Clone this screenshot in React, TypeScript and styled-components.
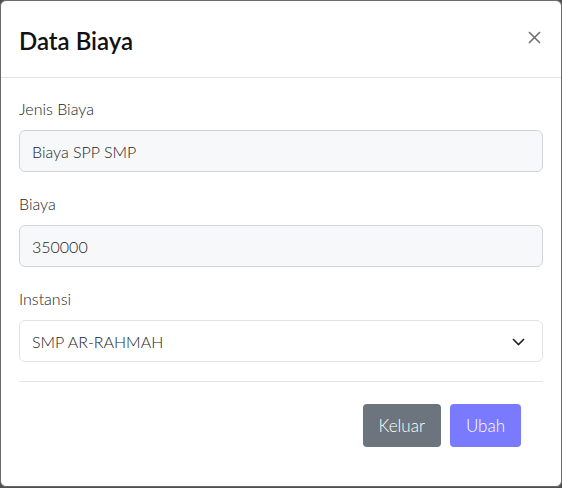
import React, { useState } from 'react';
import styled, { createGlobalStyle } from 'styled-components';

const GlobalStyle = createGlobalStyle`
  html, body {
    margin: 0;
    padding: 0;
    background: #4f4f4f;
    font-family: Lato, "Liberation Sans", sans-serif;
  }
  * {
    box-sizing: border-box;
  }
`;

const INSTANSI = ['SMP AR-RAHMAH', 'SD AR-RAHMAH', 'SMA AR-RAHMAH'];

const App: React.FC = () => {
  const [jenis, setJenis] = useState('Biaya SPP SMP');
  const [biaya, setBiaya] = useState('350000');
  const [instansi, setInstansi] = useState(INSTANSI[0]);

  return (
    <>
      <GlobalStyle />
      <Modal>
        <Header>
          <Title>Data Biaya</Title>
          <CloseButton aria-label="Close">
            <svg width="13" height="13" viewBox="0 0 13 13">
              <path d="M1 1L12 12M12 1L1 12" stroke="#6f6f6f" strokeWidth="1.6" />
            </svg>
          </CloseButton>
        </Header>
        <Body>
          <Field>
            <Label>Jenis Biaya</Label>
            <Input value={jenis} onChange={(e) => setJenis(e.target.value)} />
          </Field>
          <Field>
            <Label>Biaya</Label>
            <Input value={biaya} onChange={(e) => setBiaya(e.target.value)} />
          </Field>
          <Field>
            <Label>Instansi</Label>
            <SelectWrap>
              <Select value={instansi} onChange={(e) => setInstansi(e.target.value)}>
                {INSTANSI.map((i) => (
                  <option key={i}>{i}</option>
                ))}
              </Select>
              <Chevron width="13" height="8" viewBox="0 0 13 8">
                <path d="M1 1L6.5 6.5L12 1" stroke="#222" strokeWidth="1.6" fill="none" />
              </Chevron>
            </SelectWrap>
          </Field>
          <Divider />
          <Footer>
            <Button $variant="secondary">Keluar</Button>
            <Button $variant="primary">Ubah</Button>
          </Footer>
        </Body>
      </Modal>
    </>
  );
};

export default App;

const Modal = styled.div`
  width: 562px;
  height: 487px;
  background: #fff;
  border: 1px solid #6a6a6a;
  border-radius: 6px;
  overflow: hidden;
`;

const Header = styled.div`
  display: flex;
  align-items: center;
  justify-content: space-between;
  height: 77px;
  padding: 0 20px 0 18px;
  border-bottom: 1px solid #e3e3e3;
`;

const Title = styled.h5`
  margin: 0;
  font-size: 24px;
  font-weight: 600;
  color: #111;
  padding-top: 2px;
`;

const CloseButton = styled.button`
  display: flex;
  border: none;
  background: none;
  padding: 0;
  margin-top: -4px;
  cursor: pointer;
`;

const Body = styled.div`
  padding: 19px 18px 0 18px;
  font-weight: 300;
`;

const Field = styled.div`
  display: flex;
  flex-direction: column;
  margin-bottom: 20px;
`;

const Label = styled.label`
  font-size: 16px;
  line-height: 24px;
  color: #212529;
  margin-bottom: 9px;
`;

const Input = styled.input`
  width: 100%;
  height: 42px;
  padding: 0 12px;
  border: 1px solid #d0d3d7;
  border-radius: 6px;
  background: #f7f8fa;
  font-family: inherit;
  font-weight: inherit;
  font-size: 16px;
  color: #212529;
  outline: none;
`;

const SelectWrap = styled.div`
  position: relative;
`;

const Select = styled.select`
  width: 100%;
  height: 42px;
  padding: 0 12px;
  border: 1px solid #e1e3e7;
  border-radius: 6px;
  background: #fff;
  font-family: inherit;
  font-weight: inherit;
  font-size: 16px;
  color: #212529;
  appearance: none;
  outline: none;
`;

const Chevron = styled.svg`
  position: absolute;
  right: 18px;
  top: 18px;
  pointer-events: none;
`;

const Divider = styled.hr`
  margin: -1px 0 0;
  border: none;
  border-top: 1px solid #e6e6e6;
`;

const Footer = styled.div`
  display: flex;
  justify-content: flex-end;
  gap: 9px;
  padding: 22px 22px 0 0;
`;

const Button = styled.button<{ $variant: 'primary' | 'secondary' }>`
  height: 43px;
  padding: 0 16px;
  border: none;
  border-radius: 4px;
  background: ${({ $variant }) => ($variant === 'primary' ? '#7a7aff' : '#6c757d')};
  color: #fff;
  font-family: inherit;
  font-weight: inherit;
  font-size: 17px;
  cursor: pointer;
`;
